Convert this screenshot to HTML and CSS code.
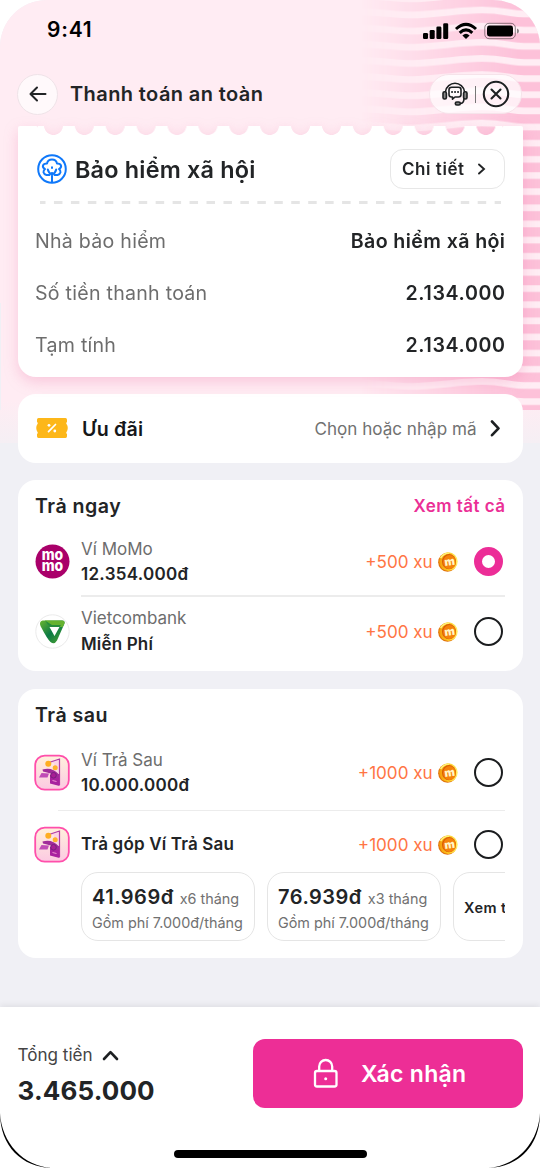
FILE: index.html
```html
<!DOCTYPE html>
<html lang="vi">
<head>
<meta charset="utf-8">
<title>Thanh toán an toàn</title>
<link rel="stylesheet" href="styles.css">
</head>
<body>
<svg class="defs" width="0" height="0" aria-hidden="true">
  <defs>
    <linearGradient id="gold" x1="0" y1="0" x2="1" y2="0"><stop offset="0" stop-color="#f29a08"/><stop offset=".5" stop-color="#fdc923"/><stop offset="1" stop-color="#fff06a"/></linearGradient>
    <linearGradient id="leaf" x1="0" y1="0" x2="1" y2="1"><stop offset="0" stop-color="#6ab52f"/><stop offset=".5" stop-color="#0b7a45"/><stop offset="1" stop-color="#58a82f"/></linearGradient>
    <linearGradient id="tile" x1="0" y1="0" x2="0" y2="1"><stop offset="0" stop-color="#fff1dc"/><stop offset="1" stop-color="#fcc9e2"/></linearGradient>
  </defs>
  <symbol id="coin" viewBox="0 0 20 20">
    <ellipse cx="9.5" cy="10.3" rx="9.3" ry="9.5" fill="#e0700a"/>
    <ellipse cx="10.4" cy="9.6" rx="9.3" ry="9.4" fill="url(#gold)"/>
    <ellipse cx="11" cy="9.7" rx="7" ry="7.6" fill="#d95a04"/>
    <ellipse cx="11.5" cy="10" rx="6.4" ry="7" fill="#f5820b"/>
    <path d="M2.600 6Q5.500 1 11 .9" stroke="#fff27a" stroke-width="1.500" fill="none"/>
    <text x="11.600" y="13.400" text-anchor="middle" transform="rotate(-8 11 10)" class="coin-m">m</text>
  </symbol>
  <symbol id="later" viewBox="0 0 36 38">
    <rect x="1.2" y="1.7" width="33.6" height="34" rx="9.5" fill="url(#tile)" stroke="#ff4fab" stroke-width="1.8"/>
    <path d="M15 8.500L25.500 5V31L20 29.500V9" fill="#fbd3e7"/>
    <path d="M15 8.500L25.500 5V31" fill="none" stroke="#b23aa4" stroke-width="1.200"/>
    <path d="M16 21L25.500 20V32L16 29.500Z" fill="#a9229f"/>
    <circle cx="14.300" cy="9.700" r="3" fill="#ffae22"/><circle cx="21.200" cy="13.800" r="2.500" fill="#ffb12d"/>
    <path d="M8.500 15.500Q18 12.500 25 20.500V25L20 20.500L13 18.500L9 17.500Z" fill="#a02c9a"/>
    <path d="M7.500 19L15 19.500L13.500 23.500L5 23.500Z" fill="#c04cb6"/>
    <circle cx="19.500" cy="21.300" r="2.800" fill="#a81d95" stroke="#75207d"/>
    <path d="M18.500 26.500l4 1" stroke="#ef91d2" stroke-width="1"/>
  </symbol>
</svg>
<main class="screen">
  <div class="hero">
    <svg class="waves" width="180" height="410" viewBox="0 0 180 410">
      <defs>
        <pattern id="stripes" width="180" height="16.150" patternUnits="userSpaceOnUse">
          <g fill="none" stroke="#ffedf4" stroke-width="6.800">
            <path d="M0-4.150C20-4.150 35-1.150 53-1.150S100-6.150 122-6.150S150-2.150 164-2.150H180"/>
            <path d="M0 12C20 12 35 15 53 15S100 10 122 10S150 14 164 14H180"/>
            <path d="M0 28.150C20 28.150 35 31.150 53 31.150S100 26.150 122 26.150S150 30.150 164 30.150H180"/>
          </g>
        </pattern>
        <linearGradient id="fade"><stop offset="0" stop-color="#fff" stop-opacity="0"/><stop offset=".88" stop-color="#fff"/></linearGradient>
        <mask id="fadeMask"><rect width="180" height="410" fill="url(#fade)"/></mask>
      </defs>
      <g mask="url(#fadeMask)"><rect width="180" height="410" fill="#fdc1d9"/><rect width="180" height="410" fill="url(#stripes)"/></g>
    </svg>
  </div>

  <div class="status">
    <span class="time">9:41</span>
    <svg width="98" height="20" viewBox="0 0 98 20">
      <rect x="0" y="11" width="5" height="6" rx="1.300"/><rect x="6.700" y="8" width="5" height="9" rx="1.300"/><rect x="13.400" y="4.500" width="5" height="12.500" rx="1.300"/><rect x="20.200" y="1.200" width="5" height="15.800" rx="1.300"/>
      <g fill="none" stroke="#000" stroke-width="3"><path d="M33 7Q43-2.400 53 7"/><path d="M36.700 10.800Q43 5 49.300 10.800"/></g><path d="M39.400 13.400Q43 10.200 46.600 13.400L43 17Z"/>
      <rect x="61.800" y="1.300" width="30.500" height="15.400" rx="4.300" fill="none" stroke="#000" stroke-opacity=".45"/><rect x="64" y="3.500" width="26" height="11" rx="2.400"/><path d="M94 6.500q2 .5 2 2.500t-2 2.500z" opacity=".45"/>
    </svg>
  </div>

  <header class="header">
    <button class="back" aria-label="Quay lại"><svg width="18" height="16" viewBox="0 0 18 16"><path d="M16.500 8H1.500M8 1.500L1.500 8L8 14.500"/></svg></button>
    <h1>Thanh toán an toàn</h1>
    <div class="tools">
      <svg width="26" height="26" viewBox="0 0 26 26" class="ico">
        <path d="M3.500 10.500A9.600 9.600 0 0 1 22.500 10.500M22 17.500Q22 22.500 18 22.500"/>
        <rect x="1" y="10.800" width="3.400" height="7.200" rx="1.500" class="filled"/><rect x="21.600" y="10.800" width="3.400" height="7.200" rx="1.500" class="filled"/>
        <rect x="13.300" y="21" width="5" height="3" rx="1.500" class="filled"/>
        <path d="M9.700 6.300H16.500Q19 6.300 19 8.700V13.500Q19 16 16.500 16H13L10.500 18.200V16H9.500Q7 16 7 13.500V8.700Q7 6.300 9.700 6.300Z"/>
        <path d="M10 11h.1M13 11h.1M16 11h.1" stroke-width="1.900"/>
      </svg>
      <i></i>
      <svg width="28" height="28" viewBox="0 0 28 28" class="ico close"><circle cx="14" cy="14" r="12.200"/><path d="M9.500 9.500L18.500 18.500M18.500 9.500L9.500 18.500"/></svg>
    </div>
  </header>

  <section class="ticket">
    <div class="edge"><span></span><b></b><span></span></div>
    <div class="ticket-body">
      <div class="ticket-head">
        <svg width="30" height="30" viewBox="0 0 30 30" fill="none" stroke="#0f78fa" stroke-width="2" stroke-linecap="round" stroke-linejoin="round">
          <circle cx="15" cy="15" r="13.800"/>
          <path d="M12.500 21H9.500C6 20 5.500 17 8 15C4.500 13 5.500 9.500 10 9.500C11 4 19 4 20 9.500C24.500 9.500 25.500 13 22 15C24.500 17 24 20 20.500 21H17.500"/>
          <path d="M15 28V19M10.800 15.500Q11.500 19 15 20.500Q18.500 19 19.200 15.500M15 13.200v.8"/>
        </svg>
        <h2>Bảo hiểm xã hội</h2>
        <button class="detail">Chi tiết<svg width="9" height="12" viewBox="0 0 9 12"><path d="M2 1.500L7 6L2 10.500"/></svg></button>
      </div>
      <svg class="dash" width="461" height="3"><path d="M0 1.500H461"/></svg>
      <dl>
        <div><dt>Nhà bảo hiểm</dt><dd class="dd-name">Bảo hiểm xã hội</dd></div>
        <div><dt>Số tiền thanh toán</dt><dd>2.134.000</dd></div>
        <div><dt>Tạm tính</dt><dd>2.134.000</dd></div>
      </dl>
    </div>
  </section>

  <section class="card voucher">
    <svg width="32" height="20" viewBox="0 0 32 20"><path d="M2.500 0H29.500Q31 0 31 1.700V4Q29.500 5 31 6.800Q32.500 10 31 13.200Q29.500 15 31 16V18.300Q31 20 29.500 20H2.500Q1 20 1 18.300V16Q2.500 15 1 13.200Q-.5 10 1 6.800Q2.500 5 1 4V1.700Q1 0 2.500 0Z" fill="#fdb719"/><path d="M12.500 13.700L19.500 6.500" stroke="#fff" stroke-width="1.700" stroke-linecap="round"/><circle cx="13" cy="7.300" r="1.400" fill="#fff"/><circle cx="18.800" cy="13" r="1.400" fill="#fff"/></svg>
    <h3>Ưu đãi</h3>
    <span>Chọn hoặc nhập mã</span>
    <svg width="11" height="17" viewBox="0 0 11 17" class="ico chevron"><path d="M2 1.500L8.500 8.300L2 15.200"/></svg>
  </section>

  <section class="card now">
    <div class="card-head"><h3>Trả ngay</h3><a>Xem tất cả</a></div>
    <div class="method momo">
      <svg width="35" height="35" viewBox="0 0 35 35"><circle cx="17.500" cy="17.500" r="17" fill="#a9006a"/><g class="momo-text"><text x="6.700" y="15.800" textLength="21.500" lengthAdjust="spacingAndGlyphs">mo</text><text x="6.700" y="27" textLength="21.500" lengthAdjust="spacingAndGlyphs">mo</text></g></svg>
      <div class="info"><span>Ví MoMo</span><strong class="num">12.354.000đ</strong></div>
      <em>+500 xu</em><svg width="20" height="20" class="coin"><use href="#coin"/></svg><i class="radio on"></i>
    </div>
    <hr>
    <div class="method bank">
      <svg width="35" height="35" viewBox="0 0 35 35"><circle cx="17.500" cy="17.500" r="16.700" fill="#fff" stroke="#eaeaea"/><path d="M7.500 6.500H27Q30.500 6.500 29.300 10L22 26.500Q19.500 31 15.500 28Q12.500 25.500 5.500 12Q3.800 7.500 7.500 6.500ZM14.500 13L19.500 22L24.500 13Z" fill="url(#leaf)" fill-rule="evenodd"/><path d="M10 6.500H27Q30.500 6.500 29.300 10L27.700 13H14.500Q13 9 10 6.500Z" fill="#65b22f"/><path d="M10 6.500L14.500 13H24.500L26 11L17 11Z" fill="#278c3d"/></svg>
      <div class="info"><span class="wide">Vietcombank</span><strong>Miễn Phí</strong></div>
      <em>+500 xu</em><svg width="20" height="20" class="coin"><use href="#coin"/></svg><i class="radio"></i>
    </div>
  </section>

  <section class="card later">
    <div class="card-head"><h3>Trả sau</h3></div>
    <div class="method wallet">
      <svg width="36" height="38"><use href="#later"/></svg>
      <div class="info"><span>Ví Trả Sau</span><strong class="num">10.000.000đ</strong></div>
      <em>+1000 xu</em><svg width="20" height="20" class="coin"><use href="#coin"/></svg><i class="radio"></i>
    </div>
    <hr>
    <div class="method split">
      <svg width="36" height="38"><use href="#later"/></svg>
      <div class="info"><strong>Trả góp Ví Trả Sau</strong></div>
      <em>+1000 xu</em><svg width="20" height="20" class="coin"><use href="#coin"/></svg><i class="radio"></i>
    </div>
    <div class="plans">
      <div class="plan"><p><b>41.969đ</b><span>x6 tháng</span></p><small>Gồm phí 7.000đ/tháng</small></div>
      <div class="plan"><p><b>76.939đ</b><span>x3 tháng</span></p><small>Gồm phí 7.000đ/tháng</small></div>
      <div class="plan more">Xem thêm</div>
    </div>
  </section>

  <footer>
    <div class="pay">
      <div class="total">
        <span>Tổng tiền<svg width="17" height="11" viewBox="0 0 17 11" class="ico chevron"><path d="M2 9L8.500 2.200L15 9"/></svg></span>
        <strong>3.465.000</strong>
      </div>
      <button class="confirm"><svg width="26" height="31" viewBox="0 0 26 31" fill="none" stroke="#fff" stroke-width="2.300"><rect x="2" y="13" width="21.500" height="15.500" rx="2"/><path d="M6.200 13V8.500A6.500 6.500 0 0 1 19.200 8.500V13"/><circle cx="12.700" cy="20.700" r="1.500" fill="#fff" stroke="none"/></svg><span>Xác nhận</span></button>
    </div>
    <div class="home"></div>
    <svg class="corner left" width="55" height="55" viewBox="0 0 55 55"><path d="M0 0C0 33 22 55 55 55H0Z" fill="#fff"/><path d="M0 0C0 33 22 54.500 52 55C23 53 1.800 30 0 0Z"/></svg>
    <svg class="corner right" width="55" height="55" viewBox="0 0 55 55"><path d="M0 0C0 33 22 55 55 55H0Z" fill="#fff"/><path d="M0 0C0 33 22 54.500 52 55C23 53 1.800 30 0 0Z"/></svg>
  </footer>
</main>
</body>
</html>
```
FILE: styles.css
```css
* { box-sizing: border-box; }
body, h1, h2, h3, p, dl, dd { margin: 0; }
body { background: #fff; font-family: Inter, "Noto Sans", sans-serif; color: #222426; }
button { font: inherit; color: inherit; padding: 0; }
h1, h2, h3, strong, dd { font-weight: 600; }
svg { flex: none; display: block; }
.defs { position: absolute; }
.screen { position: relative; width: 540px; height: 1168px; overflow: hidden; background: #f0f0f5; border-radius: 47px 47px 0 0; display: flex; flex-direction: column; isolation: isolate; }
.hero { position: absolute; z-index: -1; inset: 0 0 auto; height: 443px; background: linear-gradient(#ffecf3 0 400px, #f5eff4); }
.hero::after { content: ""; position: absolute; left: 0; top: 303px; width: 1px; height: 107px; background: #f0f0f5; }
.waves { position: absolute; right: 0; top: 0; }
.ico { fill: none; stroke: #1d2022; stroke-width: 1.6; stroke-linecap: round; stroke-linejoin: round; }
.ico .filled { fill: #888; }
.chevron { stroke-width: 2.6; }

.status { height: 74px; display: flex; justify-content: space-between; padding: 22px 19px 0 47px; }
.time { font-size: 21px; line-height: 16px; font-weight: 600; color: #000; letter-spacing: .8px; }

.header { height: 40px; display: flex; align-items: center; padding: 0 18px 0 17px; }
.back { width: 41px; height: 41px; border-radius: 50%; border: 1px solid #efe3e8; background: #fff9fb; display: grid; place-items: center; }
.back svg { fill: none; stroke: #222426; stroke-width: 2; stroke-linecap: round; stroke-linejoin: round; }
h1 { font-size: 20px; margin: 0 0 0 12px; letter-spacing: .4px; }
.tools { margin-left: auto; width: 93px; height: 40px; border-radius: 20px; border: 1px solid #f6e3ea; background: rgba(255,255,255,.72); display: flex; align-items: center; padding-left: 12px; }
.tools i { width: 1px; height: 17px; background: #777; margin: 0 6px 0 7px; }
.close { stroke-width: 2.1; }

.ticket { margin: 12px 17.5px 0; filter: drop-shadow(0 5px 7px rgba(231,91,151,.25)); }
.edge { height: 9px; display: flex; }
.edge span { flex: 1; background: #fff; border-radius: 2px 2px 0 0; }
.edge b { width: 463.5px; background: radial-gradient(circle at 50% -.5px, transparent 9.1px, #fff 9.7px) 0 0 / 30.9px 9px repeat-x; }
.ticket-body { margin-top: -.2px; height: 242px; background: #fff; border-radius: 0 0 18px 18px; padding: 14px 17.5px 0; }
.ticket-head { height: 40px; display: flex; align-items: center; padding-left: 2px; }
h2 { font-size: 23.4px; margin: 2px 0 0 8px; letter-spacing: .2px; }
.detail { margin-left: auto; width: 115px; height: 40px; border: 1.5px solid #e7e7e7; border-radius: 13px; background: #fff; font-size: 17px; font-weight: 600; letter-spacing: .55px; display: flex; align-items: center; padding-left: 11px; gap: 12px; }
.detail svg { fill: none; stroke: #222426; stroke-width: 1.9; stroke-linecap: round; }
.dash { margin: 12px 0 12px 4.5px; }
.dash path { stroke: #e5e5e5; stroke-width: 3; stroke-dasharray: 8.5 8.45; stroke-dashoffset: 3; }
dl { margin-top: -.7px; }
dl div { height: 52px; display: flex; align-items: center; justify-content: space-between; font-size: 19.6px; }
dt { color: #6d6d6d; letter-spacing: .25px; }
dd { letter-spacing: .65px; margin-right: -.65px; }
dd.dd-name { letter-spacing: .4px; margin-right: -.4px; }

.card { margin: 17px 17.5px 0; background: #fff; border-radius: 18px; padding: 0 17.5px; flex: none; }
.voucher { height: 69px; display: flex; align-items: center; padding-right: 22px; padding-left: 18.5px; }
h3 { font-size: 19.6px; letter-spacing: .5px; }
.voucher h3 { margin: 1px 0 0 14px; color: #15171a; letter-spacing: .25px; }
.voucher span { margin-left: auto; font-size: 17.1px; color: #717171; margin-right: 13px; }
.card-head { height: 53px; display: flex; align-items: center; justify-content: space-between; }
.card-head a { color: #eb2f96; font-size: 17px; font-weight: 600; letter-spacing: .45px; margin-right: -.45px; }
.now { height: 191.5px; }
.later { height: 269px; margin-top: 17.5px; }
.later .card-head { height: 52px; }
.method { display: flex; align-items: center; }
.momo { height: 57.5px; }
.bank { height: 70px; }
.wallet { height: 64px; }
.split { height: 67px; }
hr { margin: 5px 0 0 46px; border: 0; height: 1.5px; background: #ececec; }
.later hr { margin-left: 23px; }
.info { display: flex; flex-direction: column; margin-left: 11px; font-size: 17px; line-height: 25px; }
.bank .info { line-height: 25.5px; }
.info span { color: #6d6d6d; }
.info strong { letter-spacing: .17px; }
.info .num { letter-spacing: .28px; }
.later .method > svg:first-child { margin-left: -1px; }
em { margin-left: auto; font-style: normal; font-size: 17.1px; color: #ff7544; }
.coin { margin: 0 16px 0 5px; }
.coin-m { font: 900 11px Inter, sans-serif; fill: #fff5c6; }
.momo-text { font: 800 15px Inter, sans-serif; fill: #fff; }
.radio { width: 29px; height: 29px; border: 2.8px solid #1b1d1f; border-radius: 50%; margin-right: 2.3px; }
.radio.on { border: 8.5px solid #ec2d97; }

.plans { margin: -6px 0 0 46px; height: 69px; display: flex; gap: 12px; overflow: hidden; }
.plan { flex: none; width: 174px; border: 1.5px solid #e5e5e5; border-radius: 17px; padding: 10.5px 0 0 10px; white-space: nowrap; }
.plan p { display: flex; align-items: baseline; line-height: 26px; gap: 6px; }
.plan b { font-size: 20px; font-weight: 600; letter-spacing: .5px; }
.plan span, .plan small { color: #717171; font-size: 14.4px; }
.plan small { display: block; line-height: 22px; }
.plan.more { font-size: 14.5px; font-weight: 600; line-height: 48px; letter-spacing: .45px; }

footer { position: relative; margin-top: auto; height: 161px; background: #fff; box-shadow: 0 -2px 6px rgba(0,0,0,.07); }
.pay { display: flex; justify-content: space-between; padding: 32px 17.5px 0; }
.total span { display: flex; align-items: center; gap: 9.5px; font-size: 17.1px; color: #444; line-height: 32px; }
.total strong { display: block; font-size: 26px; line-height: 39px; font-weight: 700; letter-spacing: .15px; }
.confirm { width: 269.5px; height: 69px; border: 0; border-radius: 12px; background: #ed2e96; color: #fff; font-size: 23px; font-weight: 600; letter-spacing: .3px; display: flex; align-items: center; padding-left: 60px; gap: 22px; }
.home { width: 193px; height: 8px; border-radius: 4px; background: #000; margin: 40px 0 0 174px; }
.corner { position: absolute; bottom: 0; }
.corner.left { left: 0; }
.corner.right { right: 0; transform: scaleX(-1); }
```
